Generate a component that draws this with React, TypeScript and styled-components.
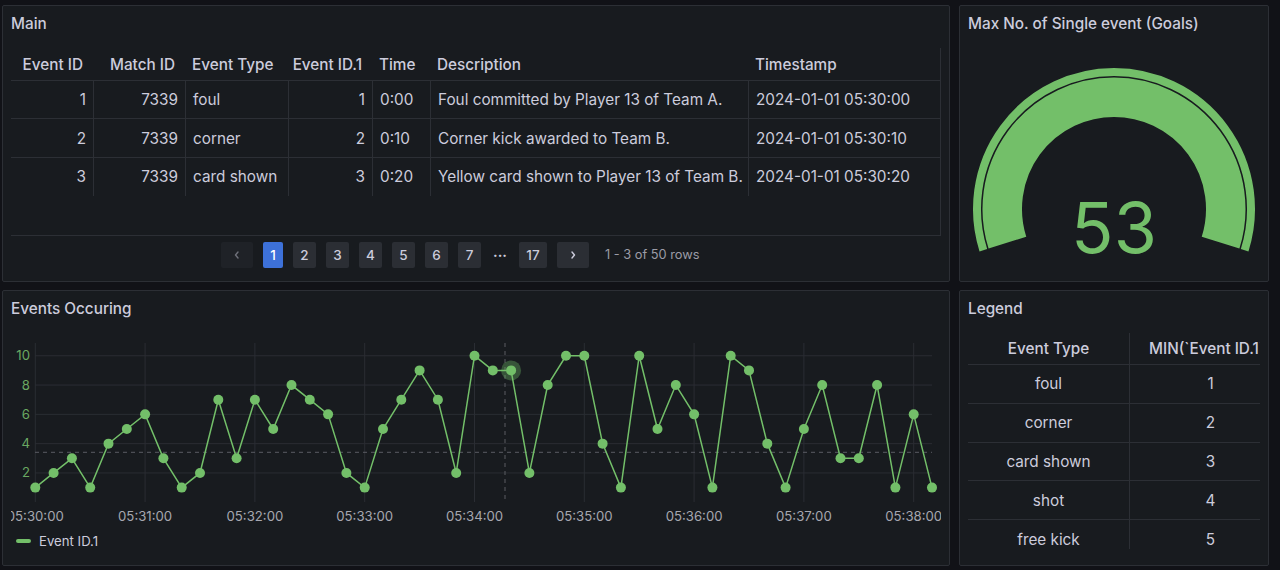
import { createGlobalStyle, styled } from "styled-components";

const GREEN = "#73bf69";
const TEXT = "#ccccdc";
const BORDER = "#2c2f35";
const FONT = "15.3px";
const SMALL = "13.2px";

const GlobalStyle = createGlobalStyle`
  *, *::before, *::after {
    box-sizing: border-box;
  }
  html, body {
    margin: 0;
    padding: 0;
    background: #111217;
  }
  body {
    font-family: Inter, "Noto Sans", sans-serif;
    color: ${TEXT};
  }
`;

const Dashboard = styled.div`
  display: grid;
  grid-template-columns: 948px 310px;
  grid-template-rows: 277px 276px;
  column-gap: 9px;
  row-gap: 8px;
  padding: 5px 0 0 2px;
`;

const Panel = styled.section`
  display: flex;
  flex-direction: column;
  background: #181b1f;
  border: 1px solid ${BORDER};
  border-radius: 2px;
  overflow: hidden;
  min-width: 0;
`;

const PanelHeader = styled.header`
  height: 32px;
  flex: none;
  display: flex;
  align-items: center;
  padding: 2px 8px 0;
  font-size: ${FONT};
  font-weight: 500;
  color: ${TEXT};
`;

const PanelBody = styled.div<{ $pad?: boolean }>`
  flex: 1;
  min-height: 0;
  display: flex;
  flex-direction: column;
  padding: ${({ $pad }) => ($pad ? "10px 8px 8px" : "0")};
`;

/* ---------- Main table ---------- */

const columns = [
  { key: "id", title: "Event ID", width: 82, align: "right" },
  { key: "match", title: "Match ID", width: 92, align: "right" },
  { key: "type", title: "Event Type", width: 103, align: "left" },
  { key: "id1", title: "Event ID.1", width: 84, align: "right" },
  { key: "time", title: "Time", width: 58, align: "left" },
  { key: "desc", title: "Description", width: 318, align: "left" },
  { key: "ts", title: "Timestamp", width: 192, align: "left" },
] as const;

const rows = [
  ["1", "7339", "foul", "1", "0:00", "Foul committed by Player 13 of Team A.", "2024-01-01 05:30:00"],
  ["2", "7339", "corner", "2", "0:10", "Corner kick awarded to Team B.", "2024-01-01 05:30:10"],
  ["3", "7339", "card shown", "3", "0:20", "Yellow card shown to Player 13 of Team B.", "2024-01-01 05:30:20"],
];

const gridCols = columns.map(c => `${c.width}px`).join(" ");

const TableWrap = styled.div`
  flex: 1;
  border-right: 1px solid ${BORDER};
  overflow: hidden;
`;

const HeadRow = styled.div`
  display: grid;
  grid-template-columns: ${gridCols};
  height: 33px;
  border-bottom: 1px solid ${BORDER};
`;

const HeadCell = styled.div<{ $align: string }>`
  display: flex;
  align-items: center;
  justify-content: ${({ $align }) => ($align === "right" ? "flex-end" : "flex-start")};
  padding: ${({ $align }) => ($align === "right" ? "0 10px 0 4px" : "0 7px")};
  font-size: ${FONT};
  font-weight: 500;
  white-space: nowrap;
  overflow: hidden;
`;

const BodyRow = styled.div`
  display: grid;
  grid-template-columns: ${gridCols};
  height: 38.4px;
  border-bottom: 1px solid ${BORDER};
  &:last-child {
    border-bottom: none;
  }
`;

const Cell = styled.div<{ $align: string }>`
  display: flex;
  align-items: center;
  justify-content: ${({ $align }) => ($align === "right" ? "flex-end" : "flex-start")};
  padding: 0 7px;
  font-size: ${FONT};
  white-space: nowrap;
  overflow: hidden;
  & + & {
    border-left: 1px solid ${BORDER};
  }
`;

const Footer = styled.div`
  height: 38px;
  flex: none;
  border-top: 1px solid ${BORDER};
  display: flex;
  align-items: center;
  gap: 10px;
  padding-left: 210px;
`;

const PageButton = styled.button<{ $active?: boolean; $disabled?: boolean; $w?: number }>`
  height: 26px;
  min-width: ${({ $w }) => $w ?? 23}px;
  padding: 0;
  border: none;
  border-radius: 2px;
  font-family: Inter, sans-serif;
  font-size: 13.5px;
  font-weight: 500;
  display: flex;
  align-items: center;
  justify-content: center;
  background: ${({ $active, $disabled }) =>
    $active ? "#3d71d9" : $disabled ? "#1f2227" : "#2b2e34"};
  color: ${({ $active, $disabled }) => ($active ? "#ffffff" : $disabled ? "#6e7079" : TEXT)};
`;

const Ellipsis = styled.span`
  width: 14px;
  margin: -6px 2px 0;
  font-size: 14px;
  font-weight: 700;
  color: ${TEXT};
  text-align: center;
`;

const RowCount = styled.span`
  margin-left: 6px;
  font-size: 12.8px;
  color: #9b9ca6;
`;

function Chevron({ dir }: { dir: "left" | "right" }) {
  return (
    <svg width="10" height="10" viewBox="0 0 10 10">
      <path
        d={dir === "left" ? "M6 2 L3.5 5 L6 8" : "M4 2 L6.5 5 L4 8"}
        fill="none"
        stroke="currentColor"
        strokeWidth="1.4"
        strokeLinecap="round"
        strokeLinejoin="round"
      />
    </svg>
  );
}

function MainPanel() {
  return (
    <Panel>
      <PanelHeader>Main</PanelHeader>
      <PanelBody $pad>
        <TableWrap>
          <HeadRow>
            {columns.map(c => (
              <HeadCell key={c.key} $align={c.align}>
                {c.title}
              </HeadCell>
            ))}
          </HeadRow>
          {rows.map((r, i) => (
            <BodyRow key={i}>
              {r.map((v, j) => (
                <Cell key={j} $align={columns[j].align}>
                  {v}
                </Cell>
              ))}
            </BodyRow>
          ))}
        </TableWrap>
        <Footer>
          <PageButton $disabled $w={32}>
            <Chevron dir="left" />
          </PageButton>
          <PageButton $active $w={20}>1</PageButton>
          {["2", "3", "4", "5", "6", "7"].map(p => (
            <PageButton key={p}>{p}</PageButton>
          ))}
          <Ellipsis>...</Ellipsis>
          <PageButton $w={28}>17</PageButton>
          <PageButton $w={32}>
            <Chevron dir="right" />
          </PageButton>
          <RowCount>1 - 3 of 50 rows</RowCount>
        </Footer>
      </PanelBody>
    </Panel>
  );
}

/* ---------- Gauge ---------- */

const GaugeSvg = styled.svg`
  display: block;
  flex: 1;
`;

function arcPath(cx: number, cy: number, r: number, deg: number) {
  const a0 = ((180 + deg) * Math.PI) / 180;
  const a1 = (-deg * Math.PI) / 180;
  const sx = cx + r * Math.cos(a0);
  const sy = cy - r * Math.sin(a0);
  const ex = cx + r * Math.cos(a1);
  const ey = cy - r * Math.sin(a1);
  return `M ${sx} ${sy} A ${r} ${r} 0 1 1 ${ex} ${ey}`;
}

function GaugePanel() {
  const cx = 1114;
  const cy = 209;
  return (
    <Panel>
      <PanelHeader>Max No. of Single event (Goals)</PanelHeader>
      <PanelBody>
        <GaugeSvg width="308" height="243" viewBox="960 38 308 243">
          <path d={arcPath(cx, cy, 137, 17.5)} fill="none" stroke={GREEN} strokeWidth="8" />
          <path d={arcPath(cx, cy, 111.75, 17.5)} fill="none" stroke={GREEN} strokeWidth="39.5" />
          <text
            x={cx}
            y={253}
            textAnchor="middle"
            fill={GREEN}
            fontSize="70"
            fontFamily="Inter, sans-serif"
          >
            53
          </text>
        </GaugeSvg>
      </PanelBody>
    </Panel>
  );
}

/* ---------- Time series ---------- */

const values = [
  1, 2, 3, 1, 4, 5, 6, 3, 1, 2, 7, 3, 7, 5, 8, 7, 6, 2, 1, 5, 7, 9, 7, 2, 10,
  9, 9, 2, 8, 10, 10, 4, 1, 10, 5, 8, 6, 1, 10, 9, 4, 1, 5, 8, 3, 3, 8, 1, 6, 1,
];

const px = (i: number) => 35.3 + i * 18.3;
const py = (v: number) => 487.6 - (v - 1) * 14.65;

const ChartSvg = styled.svg`
  display: block;
  flex: none;
`;

const Legend = styled.div`
  flex: 1;
  display: flex;
  align-items: center;
  gap: 8px;
  padding-left: 5px;
  font-size: ${SMALL};
  color: ${TEXT};
`;

const LegendMark = styled.span`
  width: 15px;
  height: 4px;
  border-radius: 2px;
  background: ${GREEN};
`;

function EventsPanel() {
  const minutes = Array.from({ length: 9 }, (_, k) => k);
  const line = values.map((v, i) => `${i ? "L" : "M"} ${px(i)} ${py(v)}`).join(" ");
  return (
    <Panel>
      <PanelHeader>Events Occuring</PanelHeader>
      <PanelBody $pad>
        <ChartSvg width="930" height="192" viewBox="11 333 930 192">
          <g stroke="#2a2d33" strokeWidth="1">
            {[2, 4, 6, 8, 10].map(v => (
              <line key={v} x1={35} x2={932} y1={py(v)} y2={py(v)} />
            ))}
            {minutes.map(k => (
              <line key={k} x1={px(k * 6)} x2={px(k * 6)} y1={343} y2={502} />
            ))}
          </g>
          <g stroke="#5a5c63" strokeWidth="1" strokeDasharray="4 4">
            <line x1={505} x2={505} y1={343} y2={502} />
            <line x1={35} x2={932} y1={452.3} y2={452.3} />
          </g>
          <g fill="#6aa862" fontSize={SMALL} fontFamily="Inter, sans-serif" textAnchor="end">
            {[2, 4, 6, 8, 10].map(v => (
              <text key={v} x={30} y={py(v) + 4.5}>
                {v}
              </text>
            ))}
          </g>
          <g fill="#a6a7b0" fontSize={SMALL} fontFamily="Inter, sans-serif" textAnchor="middle">
            {minutes.map(k => (
              <text key={k} x={px(k * 6)} y={520.5}>
                {`05:3${k}:00`}
              </text>
            ))}
          </g>
          <path d={line} fill="none" stroke={GREEN} strokeWidth="1.5" />
          <circle cx={px(26)} cy={py(9)} r={10} fill={GREEN} opacity={0.35} />
          {values.map((v, i) => (
            <circle key={i} cx={px(i)} cy={py(v)} r={5} fill={GREEN} />
          ))}
        </ChartSvg>
        <Legend>
          <LegendMark />
          Event ID.1
        </Legend>
      </PanelBody>
    </Panel>
  );
}

/* ---------- Legend table ---------- */

const legendRows = [
  ["foul", "1"],
  ["corner", "2"],
  ["card shown", "3"],
  ["shot", "4"],
  ["free kick", "5"],
];

const LegendWrap = styled.div`
  height: 216px;
  overflow: hidden;
`;

const LegendTable = styled.div`
  width: 323px;
`;

const LHeadRow = styled.div`
  display: grid;
  grid-template-columns: 161px 162px;
  height: 32px;
  border-bottom: 1px solid ${BORDER};
`;

const LRow = styled.div`
  display: grid;
  grid-template-columns: 161px 162px;
  height: 38.8px;
  border-bottom: 1px solid ${BORDER};
`;

const LCell = styled.div<{ $head?: boolean }>`
  display: flex;
  align-items: center;
  justify-content: center;
  font-size: ${FONT};
  font-weight: ${({ $head }) => ($head ? 500 : 400)};
  white-space: nowrap;
  overflow: hidden;
  & + & {
    border-left: 1px solid ${({ $head }) => ($head ? "transparent" : BORDER)};
  }
`;

const LHeadWide = styled(LCell)`
  justify-content: flex-start;
  padding-left: 19px;
`;

function LegendPanel() {
  return (
    <Panel>
      <PanelHeader>Legend</PanelHeader>
      <PanelBody $pad>
        <LegendWrap>
          <LegendTable>
            <LHeadRow>
              <LCell $head>Event Type</LCell>
              <LHeadWide $head>MIN(`Event ID.1`)</LHeadWide>
            </LHeadRow>
            {legendRows.map(r => (
              <LRow key={r[0]}>
                <LCell>{r[0]}</LCell>
                <LCell>{r[1]}</LCell>
              </LRow>
            ))}
          </LegendTable>
        </LegendWrap>
      </PanelBody>
    </Panel>
  );
}

export default function App() {
  return (
    <>
      <GlobalStyle />
      <Dashboard>
        <MainPanel />
        <GaugePanel />
        <EventsPanel />
        <LegendPanel />
      </Dashboard>
    </>
  );
}
